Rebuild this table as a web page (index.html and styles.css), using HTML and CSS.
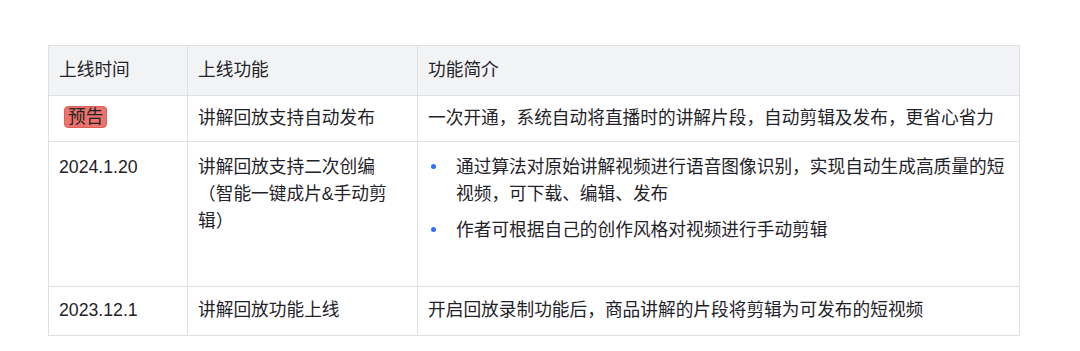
FILE: index.html
```html
<!DOCTYPE html>
<html lang="zh-CN">
<head>
<meta charset="utf-8">
<link rel="stylesheet" href="styles.css">
</head>
<body>
<table class="log">
  <colgroup>
    <col class="c1"><col class="c2"><col class="c3">
  </colgroup>
  <thead>
    <tr class="row-head">
      <th>上线时间</th>
      <th>上线功能</th>
      <th>功能简介</th>
    </tr>
  </thead>
  <tbody>
    <tr class="row-a">
      <td><span class="badge">预告</span></td>
      <td>讲解回放支持自动发布</td>
      <td>一次开通，系统自动将直播时的讲解片段，自动剪辑及发布，更省心省力</td>
    </tr>
    <tr class="row-b">
      <td>2024.1.20</td>
      <td>讲解回放支持二次创编（智能一键成片&amp;手动剪辑）</td>
      <td>
        <ul class="points">
          <li>通过算法对原始讲解视频进行语音图像识别，实现自动生成高质量的短视频，可下载、编辑、发布</li>
          <li>作者可根据自己的创作风格对视频进行手动剪辑</li>
        </ul>
      </td>
    </tr>
    <tr class="row-c">
      <td>2023.12.1</td>
      <td>讲解回放功能上线</td>
      <td>开启回放录制功能后，商品讲解的片段将剪辑为可发布的短视频</td>
    </tr>
  </tbody>
</table>
</body>
</html>
```

FILE: styles.css
```css
html, body {
  margin: 0;
  background: #ffffff;
}
body {
  padding: 45px 0 0 48px;
  font-family: "Liberation Sans", "Noto Sans CJK SC", sans-serif;
  font-size: 17.7px;
  line-height: 27px;
  color: #1f2329;
}
.log {
  border-collapse: collapse;
  table-layout: fixed;
  width: 971px;
}
.c1 { width: 139px; }
.c2 { width: 230px; }
.c3 { width: 602px; }
.log th, .log td {
  border: 1px solid #dee0e3;
  padding: 11px 10px;
  text-align: left;
  vertical-align: top;
  font-weight: 400;
  word-break: normal;
}
.row-head th {
  background: #f2f3f5;
  padding-top: 11px;
  padding-bottom: 11px;
}
.row-a td {
  padding-top: 9px;
  padding-bottom: 9px;
}
.row-b td {
  padding-top: 12px;
  padding-bottom: 42px;
}
.row-c td {
  padding-top: 10px;
  padding-bottom: 11px;
}
.badge {
  display: inline-block;
  margin-left: 5px;
  padding: 0 3px;
  line-height: 20px;
  border: 1px solid #d9625a;
  border-radius: 4px;
  background: #ec736b;
  color: #1f2329;
  vertical-align: 1px;
}
.points {
  list-style: none;
  margin: 0;
  padding: 0;
  display: flex;
  flex-direction: column;
  gap: 9px;
}
.points li {
  display: flex;
}
.points li::before {
  content: "";
  flex-shrink: 0;
  width: 5px;
  height: 5px;
  border-radius: 50%;
  background: #3370ff;
  margin: 10px 20px 0 3px;
}
```
